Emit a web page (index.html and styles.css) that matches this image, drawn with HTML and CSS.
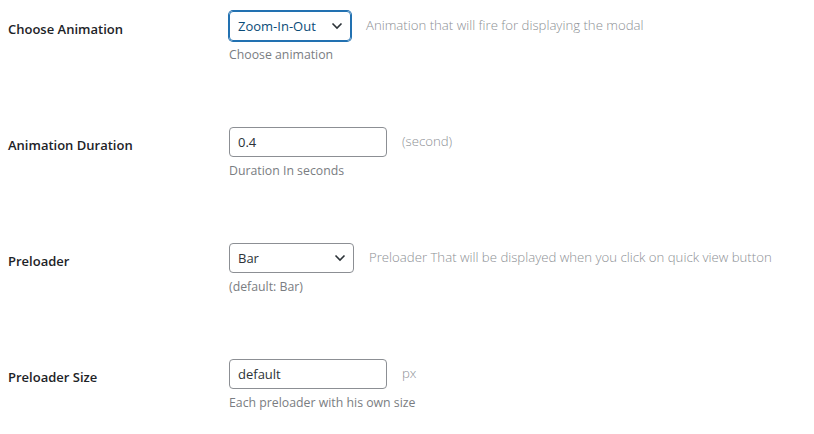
FILE: index.html
```html
<!DOCTYPE html>
<html>
<head>
<meta charset="utf-8">
<link rel="stylesheet" href="styles.css">
</head>
<body>
<div class="form">
  <div class="row">
    <div class="label">Choose Animation</div>
    <div class="field">
      <div class="line">
        <div class="select select-anim is-focus">
          <span class="value">Zoom-In-Out</span>
          <svg class="chev" width="12" height="8" viewBox="0 0 12 8"><path d="M1.5 1.5 L6 6 L10.5 1.5" fill="none" stroke="#2c3338" stroke-width="1.6"/></svg>
        </div>
        <span class="side">Animation that will fire for displaying the modal</span>
      </div>
      <p class="desc">Choose animation</p>
    </div>
  </div>

  <div class="row">
    <div class="label">Animation Duration</div>
    <div class="field">
      <div class="line">
        <div class="input">0.4</div>
        <span class="side">(second)</span>
      </div>
      <p class="desc">Duration In seconds</p>
    </div>
  </div>

  <div class="row">
    <div class="label">Preloader</div>
    <div class="field">
      <div class="line">
        <div class="select select-pre">
          <span class="value">Bar</span>
          <svg class="chev" width="12" height="8" viewBox="0 0 12 8"><path d="M1.5 1.5 L6 6 L10.5 1.5" fill="none" stroke="#2c3338" stroke-width="1.6"/></svg>
        </div>
        <span class="side">Preloader That will be displayed when you click on quick view button</span>
      </div>
      <p class="desc">(default: Bar)</p>
    </div>
  </div>

  <div class="row">
    <div class="label">Preloader Size</div>
    <div class="field">
      <div class="line">
        <div class="input">default</div>
        <span class="side">px</span>
      </div>
      <p class="desc">Each preloader with his own size</p>
    </div>
  </div>
</div>
</body>
</html>
```

FILE: styles.css
```css
* { box-sizing: border-box; }
html, body { margin: 0; padding: 0; background: #fff; }
body {
  font-family: "Open Sans", "Noto Sans", "Liberation Sans", sans-serif;
  color: #1d2327;
}
.form { padding-left: 8px; }
.row {
  display: grid;
  grid-template-columns: 221px 1fr;
  height: 116px;
  padding-top: 11px;
}
.row:last-child { height: auto; }
.label {
  font-size: 13px;
  font-weight: 600;
  line-height: 20px;
  margin-top: 8px;
  color: #1d2327;
}
.line {
  display: flex;
  align-items: center;
  gap: 15px;
}
.select {
  height: 30px;
  border: 1px solid #8c8f94;
  border-radius: 4px;
  display: flex;
  align-items: center;
  justify-content: space-between;
  padding: 0 7px 0 8px;
  font-size: 13px;
  color: #2c3338;
}
.select.is-focus {
  border-color: #2271b1;
  box-shadow: 0 0 0 1px #2271b1;
  color: #0a4b78;
}
.select-anim { width: 122px; }
.select-pre { width: 125px; }
.chev { display: block; }
.input {
  width: 158px;
  height: 30px;
  border: 1px solid #8c8f94;
  border-radius: 4px;
  padding: 0 8px;
  font-size: 13px;
  line-height: 28px;
  color: #2c3338;
}
.side {
  font-size: 13.2px;
  font-weight: 300;
  color: #8c8f94;
  margin-top: -3px;
}
.desc {
  margin: 5px 0 0;
  font-size: 12.3px;
  line-height: 18px;
  color: #7a7d82;
}
```
